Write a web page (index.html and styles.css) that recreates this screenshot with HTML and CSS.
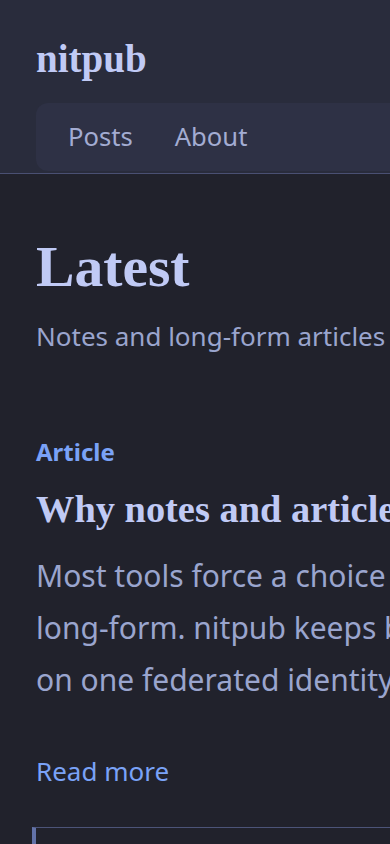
FILE: index.html
```html
<!DOCTYPE html>
<html lang="en">
<head>
    <meta charset="UTF-8">
    <meta name="viewport" content="width=device-width, initial-scale=1.0">
    <title>nitpub</title>
    <link rel="stylesheet" href="styles.css">
</head>
<body>
    <div class="page">
        <header class="site-header">
            <div class="brand">nitpub</div>
            <nav class="nav">
                <a href="#">Posts</a>
                <a href="#">About</a>
            </nav>
        </header>

        <main class="content">
            <h1>Latest</h1>
            <p class="lead">Notes and long-form articles from the fediverse.</p>

            <article class="entry">
                <div class="kind">Article</div>
                <h2>Why notes and articles belong together</h2>
                <p class="summary">Most tools force a choice between microblogging and long-form. nitpub keeps both in a single shared timeline, on one federated identity that follows you anywhere.</p>
                <a class="more" href="#">Read more</a>
            </article>

            <article class="entry note">
                <div class="kind">Note</div>
                <p class="summary">Shipped threaded replies today.</p>
            </article>
        </main>
    </div>
</body>
</html>
```

FILE: styles.css
```css
body {
    margin: 0;
    background: #21222c;
    color: #9aa5ce;
    font-family: "Noto Sans", sans-serif;
}
a { text-decoration: none; }

.page { min-width: 920px; }

.site-header {
    background: #292c3c;
    border-bottom: 1px solid #4a5073;
    padding: 36px 0 2px 36px;
}
.brand {
    font-family: "Liberation Serif", serif;
    font-weight: 700;
    font-size: 39px;
    line-height: 1.2;
    color: #c0caf5;
}
.nav {
    display: flex;
    gap: 42px;
    margin-top: 20px;
    padding: 14px 32px;
    background: #2e3145;
    border-radius: 12px 0 0 12px;
}
.nav a { color: #a3acd2; font-size: 25.6px; line-height: 40px; }

.content { padding: 58px 32px 0; }
.content h1 {
    margin: 0 0 0 4px;
    font-family: "Liberation Serif", serif;
    font-size: 57.6px;
    line-height: 1.2;
    color: #c0caf5;
}
.lead { margin: 17px 0 0 4px; font-size: 26px; line-height: 36px; }

.entry { border-left: 4px solid transparent; margin-top: 80px; padding-bottom: 33px; }
.entry + .entry { border-top: 1px solid #4c5478; border-left-color: #6272a8; margin-top: 0; padding-top: 24px; }
.kind { color: #7aa2f7; font-weight: 700; font-size: 24px; line-height: 36px; }
.entry h2 {
    margin: 14px 0 0;
    font-family: "Liberation Serif", serif;
    font-size: 38.4px;
    line-height: 50px;
    color: #c0caf5;
    white-space: nowrap;
}
.summary { margin: 16px 0 0; max-width: 825px; font-size: 30px; line-height: 52px; }
.more { display: inline-block; margin-top: 42px; color: #7aa2f7; font-size: 26px; line-height: 46px; }
```
